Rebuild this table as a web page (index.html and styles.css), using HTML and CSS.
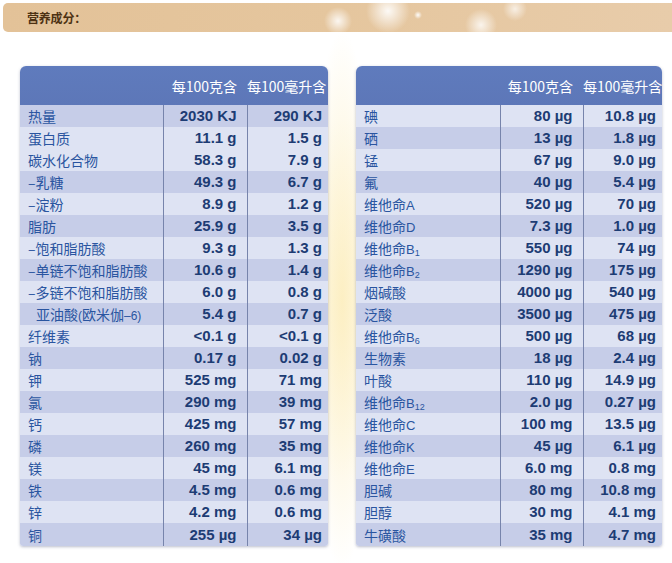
FILE: index.html
```html
<!DOCTYPE html>
<html lang="zh">
<head>
<meta charset="utf-8">
<link rel="stylesheet" href="styles.css">
</head>
<body>
<div class="banner"><span class="banner-title">营养成分：</span></div>
<div class="tables">
  <div class="card card-left">
    <table class="nt">
      <colgroup><col class="c-name-l"><col class="c-v1-l"><col class="c-v2-l"></colgroup>
      <thead><tr><th></th><th>每100克含</th><th>每100毫升含</th></tr></thead>
      <tbody>
        <tr class="dk"><td>热量</td><td>2030 KJ</td><td>290 KJ</td></tr>
        <tr class="lt"><td>蛋白质</td><td>11.1 g</td><td>1.5 g</td></tr>
        <tr class="lt"><td>碳水化合物</td><td>58.3 g</td><td>7.9 g</td></tr>
        <tr class="dk"><td>–乳糖</td><td>49.3 g</td><td>6.7 g</td></tr>
        <tr class="lt"><td>–淀粉</td><td>8.9 g</td><td>1.2 g</td></tr>
        <tr class="dk"><td>脂肪</td><td>25.9 g</td><td>3.5 g</td></tr>
        <tr class="lt"><td>–饱和脂肪酸</td><td>9.3 g</td><td>1.3 g</td></tr>
        <tr class="dk"><td>–单链不饱和脂肪酸</td><td>10.6 g</td><td>1.4 g</td></tr>
        <tr class="lt"><td>–多链不饱和脂肪酸</td><td>6.0 g</td><td>0.8 g</td></tr>
        <tr class="dk"><td class="indent">亚油酸<span class="sm">(</span>欧米伽<span class="sm">–6)</span></td><td>5.4 g</td><td>0.7 g</td></tr>
        <tr class="lt"><td>纤维素</td><td>&lt;0.1 g</td><td>&lt;0.1 g</td></tr>
        <tr class="dk"><td>钠</td><td>0.17 g</td><td>0.02 g</td></tr>
        <tr class="lt"><td>钾</td><td>525 mg</td><td>71 mg</td></tr>
        <tr class="dk"><td>氯</td><td>290 mg</td><td>39 mg</td></tr>
        <tr class="lt"><td>钙</td><td>425 mg</td><td>57 mg</td></tr>
        <tr class="dk"><td>磷</td><td>260 mg</td><td>35 mg</td></tr>
        <tr class="lt"><td>镁</td><td>45 mg</td><td>6.1 mg</td></tr>
        <tr class="dk"><td>铁</td><td>4.5 mg</td><td>0.6 mg</td></tr>
        <tr class="lt"><td>锌</td><td>4.2 mg</td><td>0.6 mg</td></tr>
        <tr class="dk"><td>铜</td><td>255 µg</td><td>34 µg</td></tr>
      </tbody>
    </table>
  </div>
  <div class="card card-right">
    <table class="nt">
      <colgroup><col class="c-name-r"><col class="c-v1-r"><col class="c-v2-r"></colgroup>
      <thead><tr><th></th><th>每100克含</th><th>每100毫升含</th></tr></thead>
      <tbody>
        <tr class="lt"><td>碘</td><td>80 µg</td><td>10.8 µg</td></tr>
        <tr class="dk"><td>硒</td><td>13 µg</td><td>1.8 µg</td></tr>
        <tr class="lt"><td>锰</td><td>67 µg</td><td>9.0 µg</td></tr>
        <tr class="dk"><td>氟</td><td>40 µg</td><td>5.4 µg</td></tr>
        <tr class="lt"><td>维他命<span class="lat">A</span></td><td>520 µg</td><td>70 µg</td></tr>
        <tr class="dk"><td>维他命<span class="lat">D</span></td><td>7.3 µg</td><td>1.0 µg</td></tr>
        <tr class="lt"><td>维他命<span class="lat">B<span class="sb">1</span></span></td><td>550 µg</td><td>74 µg</td></tr>
        <tr class="dk"><td>维他命<span class="lat">B<span class="sb">2</span></span></td><td>1290 µg</td><td>175 µg</td></tr>
        <tr class="lt"><td>烟碱酸</td><td>4000 µg</td><td>540 µg</td></tr>
        <tr class="dk"><td>泛酸</td><td>3500 µg</td><td>475 µg</td></tr>
        <tr class="lt"><td>维他命<span class="lat">B<span class="sb">6</span></span></td><td>500 µg</td><td>68 µg</td></tr>
        <tr class="dk"><td>生物素</td><td>18 µg</td><td>2.4 µg</td></tr>
        <tr class="lt"><td>叶酸</td><td>110 µg</td><td>14.9 µg</td></tr>
        <tr class="dk"><td>维他命<span class="lat">B<span class="sb">12</span></span></td><td>2.0 µg</td><td>0.27 µg</td></tr>
        <tr class="lt"><td>维他命<span class="lat">C</span></td><td>100 mg</td><td>13.5 µg</td></tr>
        <tr class="dk"><td>维他命<span class="lat">K</span></td><td>45 µg</td><td>6.1 µg</td></tr>
        <tr class="lt"><td>维他命<span class="lat">E</span></td><td>6.0 mg</td><td>0.8 mg</td></tr>
        <tr class="dk"><td>胆碱</td><td>80 mg</td><td>10.8 mg</td></tr>
        <tr class="lt"><td>胆醇</td><td>30 mg</td><td>4.1 mg</td></tr>
        <tr class="dk"><td>牛磺酸</td><td>35 mg</td><td>4.7 mg</td></tr>
      </tbody>
    </table>
  </div>
</div>
</body>
</html>
```
FILE: styles.css
```css
html, body {
  margin: 0;
  padding: 0;
}
body {
  width: 672px;
  height: 563px;
  overflow: hidden;
  background:
    radial-gradient(ellipse 34px 270px at 342px 300px, rgba(252, 236, 185, 0.8), rgba(255, 255, 255, 0) 100%),
    radial-gradient(ellipse 120px 180px at 340px 300px, rgba(253, 246, 215, 0.5), rgba(255, 255, 255, 0) 100%),
    #ffffff;
  font-family: "Noto Sans CJK SC", "Noto Sans", sans-serif;
}
.banner {
  margin: 3px 0 0 3px;
  height: 29px;
  border-radius: 5px 0 0 5px;
  display: flex;
  align-items: center;
  background:
    radial-gradient(circle 14px at 335px 18px, rgba(255, 255, 255, 0.85), rgba(255, 255, 255, 0)),
    radial-gradient(circle 22px at 385px 8px, rgba(255, 255, 255, 0.9), rgba(255, 255, 255, 0)),
    radial-gradient(circle 4px at 415px 12px, rgba(255, 255, 255, 0.95), rgba(255, 255, 255, 0)),
    radial-gradient(circle 16px at 478px 22px, rgba(255, 255, 255, 0.8), rgba(255, 255, 255, 0)),
    radial-gradient(circle 12px at 512px 6px, rgba(255, 255, 255, 0.7), rgba(255, 255, 255, 0)),
    linear-gradient(90deg, #e3c298 0%, #e5c69e 50%, #e8ccaa 100%);
}
.banner-title {
  margin-left: 24px;
  font-size: 12px;
  font-weight: 700;
  color: #4e3213;
  letter-spacing: -0.2px;
}
.tables {
  display: flex;
  align-items: flex-start;
  gap: 28px;
  margin-top: 34px;
  padding-left: 20px;
}
.card {
  border-radius: 6px 6px 3px 3px;
  overflow: hidden;
  box-shadow: 0 1px 3px rgba(60, 70, 110, 0.35);
}
.card-left { width: 308px; }
.card-right { width: 306px; }
.nt {
  border-collapse: collapse;
  table-layout: fixed;
  width: 100%;
}
.c-name-l { width: 143px; }
.c-v1-l { width: 84px; }
.c-v2-l { width: 81px; }
.c-name-r { width: 144px; }
.c-v1-r { width: 83px; }
.c-v2-r { width: 79px; }
.nt th {
  height: 39px;
  padding: 0 10px 0 0;
  background: linear-gradient(180deg, #5f7bbd 0%, #5d77b8 100%);
  color: #ffffff;
  font-weight: 400;
  font-size: 14px;
  text-align: right;
  white-space: nowrap;
  box-sizing: border-box;
}
.nt th:last-child { padding-right: 5px; }
.nt td {
  height: 22px;
  padding: 0;
  font-size: 14px;
  line-height: 22px;
  white-space: nowrap;
  box-sizing: border-box;
  overflow: hidden;
}
.nt td:first-child {
  padding-left: 8px;
  color: #2a55a0;
}
.nt td + td {
  border-left: 1px solid #7784ab;
  text-align: right;
  padding-right: 10px;
  font-family: "Liberation Sans", Arial, sans-serif;
  font-weight: 700;
  font-size: 15px;
  color: #1d3c74;
}
.nt td:last-child { padding-right: 6px; }
.nt tr.dk td { background: #c6cde8; }
.nt tr.lt td { background: #dee3f3; }
.nt tbody tr:last-child td { height: 23px; }
.indent { padding-left: 16px !important; }
.sm {
  font-family: "Liberation Sans", Arial, sans-serif;
  font-size: 12px;
  line-height: 0;
}
.lat {
  font-family: "Liberation Sans", Arial, sans-serif;
  font-size: 13px;
  line-height: 0;
}
.sb {
  font-size: 9px;
  line-height: 0;
  position: relative;
  top: 2px;
}
```
